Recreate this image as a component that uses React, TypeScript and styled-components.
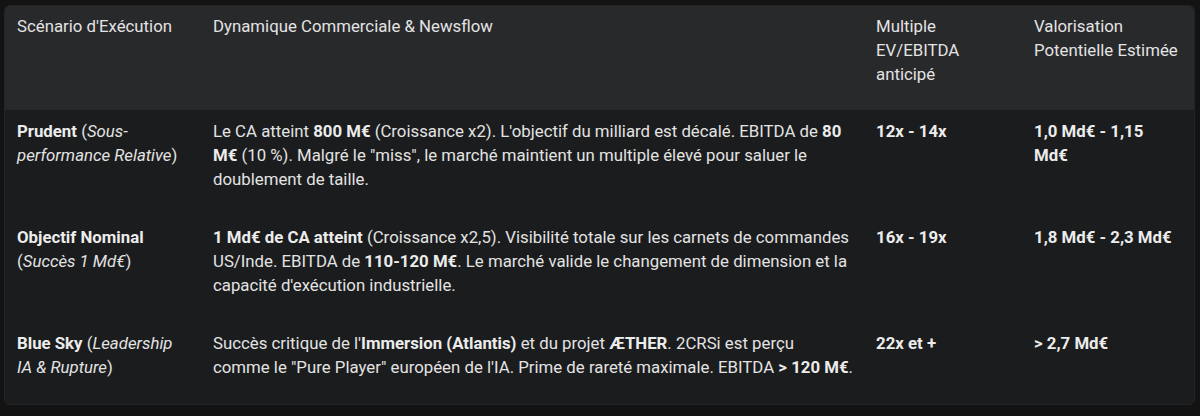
import React from "react";
import styled, { createGlobalStyle } from "styled-components";

const Global = createGlobalStyle`
  html, body { margin: 0; padding: 0; background: #131314; }
  body { font-family: Roboto, "Noto Sans", Arial, sans-serif; }
`;

const Page = styled.div`
  padding: 5px 5px 0 4px;
`;

const Frame = styled.div`
  border-radius: 6px;
  overflow: hidden;
  border: 1px solid #232426;
  background: #1b1c1d;
`;

const Table = styled.table`
  width: 100%;
  border-collapse: collapse;
  table-layout: fixed;
  color: #e3e3e3;
  font-size: 16.8px;
  line-height: 24px;
`;

const HeadRow = styled.tr`
  background: #28292b;
`;

const Th = styled.th<{ $w?: number }>`
  box-sizing: border-box;
  ${(p) => (p.$w ? `width: ${p.$w}px;` : "")}
  text-align: left;
  vertical-align: top;
  font-weight: 400;
  white-space: nowrap;
  padding: 8px 12px 24px;
`;

const Td = styled.td`
  vertical-align: top;
  white-space: nowrap;
  padding: 9px 12px 25px;
`;

const B = styled.strong`
  font-weight: 700;
  color: #ececec;
`;

const I = styled.em`
  font-style: italic;
`;

export default function App() {
  return (
    <>
      <Global />
      <Page>
        <Frame>
          <Table>
            <thead>
              <HeadRow>
                <Th $w={196}>Scénario d'Exécution</Th>
                <Th $w={663}>Dynamique Commerciale &amp; Newsflow</Th>
                <Th $w={158}>
                  Multiple
                  <br />
                  EV/EBITDA
                  <br />
                  anticipé
                </Th>
                <Th>
                  Valorisation
                  <br />
                  Potentielle Estimée
                </Th>
              </HeadRow>
            </thead>
            <tbody>
              <tr>
                <Td>
                  <B>Prudent</B> (<I>Sous-</I>
                  <br />
                  <I>performance Relative</I>)
                </Td>
                <Td>
                  Le CA atteint <B>800 M€</B> (Croissance x2). L'objectif du milliard est décalé. EBITDA de <B>80</B>
                  <br />
                  <B>M€</B> (10 %). Malgré le "miss", le marché maintient un multiple élevé pour saluer le
                  <br />
                  doublement de taille.
                </Td>
                <Td>
                  <B>12x - 14x</B>
                </Td>
                <Td>
                  <B>
                    1,0 Md€ - 1,15
                    <br />
                    Md€
                  </B>
                </Td>
              </tr>
              <tr>
                <Td>
                  <B>Objectif Nominal</B>
                  <br />
                  (<I>Succès 1 Md€</I>)
                </Td>
                <Td>
                  <B>1 Md€ de CA atteint</B> (Croissance x2,5). Visibilité totale sur les carnets de commandes
                  <br />
                  US/Inde. EBITDA de <B>110-120 M€</B>. Le marché valide le changement de dimension et la
                  <br />
                  capacité d'exécution industrielle.
                </Td>
                <Td>
                  <B>16x - 19x</B>
                </Td>
                <Td>
                  <B>1,8 Md€ - 2,3 Md€</B>
                </Td>
              </tr>
              <tr>
                <Td>
                  <B>Blue Sky</B> (<I>Leadership</I>
                  <br />
                  <I>IA &amp; Rupture</I>)
                </Td>
                <Td>
                  Succès critique de l'<B>Immersion (Atlantis)</B> et du projet <B>ÆTHER</B>. 2CRSi est perçu
                  <br />
                  comme le "Pure Player" européen de l'IA. Prime de rareté maximale. EBITDA <B>&gt; 120 M€</B>.
                </Td>
                <Td>
                  <B>22x et +</B>
                </Td>
                <Td>
                  <B>&gt; 2,7 Md€</B>
                </Td>
              </tr>
            </tbody>
          </Table>
        </Frame>
      </Page>
    </>
  );
}
